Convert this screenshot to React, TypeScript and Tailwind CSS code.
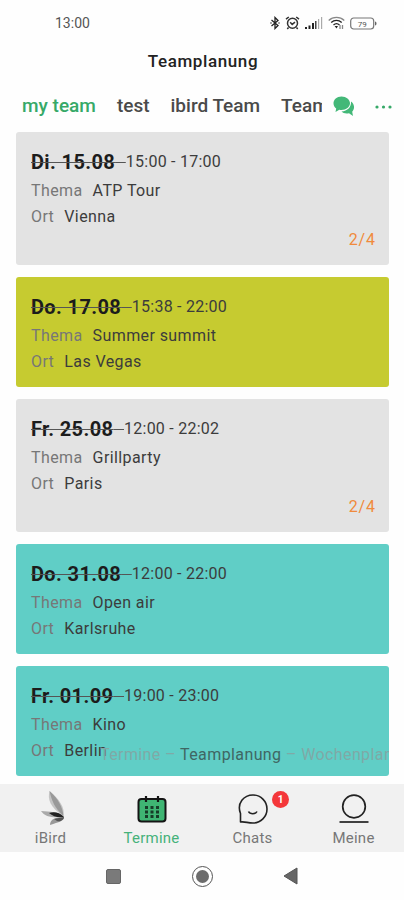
import { ReactNode } from "react";

interface Appointment {
  date: string;
  time: string;
  topic: string;
  place: string;
  color: string;
  count?: string;
}

const appointments: Appointment[] = [
  { date: "Di. 15.08", time: "15:00 - 17:00", topic: "ATP Tour", place: "Vienna", color: "bg-[#e3e3e3]", count: "2/4" },
  { date: "Do. 17.08", time: "15:38 - 22:00", topic: "Summer summit", place: "Las Vegas", color: "bg-[#c6cb30]" },
  { date: "Fr. 25.08", time: "12:00 - 22:02", topic: "Grillparty", place: "Paris", color: "bg-[#e3e3e3]", count: "2/4" },
  { date: "Do. 31.08", time: "12:00 - 22:00", topic: "Open air", place: "Karlsruhe", color: "bg-[#60cec6]" },
  { date: "Fr. 01.09", time: "19:00 - 23:00", topic: "Kino", place: "Berlin", color: "bg-[#60cec6]" },
];

function StatusBar() {
  return (
    <div className="flex h-[46px] items-center justify-between pr-[27px] pl-[55px] text-[#555]">
      <span className="text-[14px]">13:00</span>
      <div className="flex items-center">
        {/* Bluetooth */}
        <svg width="10" height="14" viewBox="0 0 10 14" fill="none" stroke="#222" strokeWidth="1.3">
          <path d="M1.5 4 8 9.5 5 12.5V1.5L8 4.5 1.5 10" />
          <path d="M.5 7h1M8.5 7h1" />
        </svg>
        {/* Alarm */}
        <svg className="ml-[5px]" width="15" height="14" viewBox="0 0 15 14" fill="none" stroke="#333" strokeWidth="1.5">
          <circle cx="7.5" cy="7.3" r="5" />
          <path d="M1 3.2 3.8 1M14 3.2 11.2 1M5.2 6.2l2 2.2 2.8-2.2M3.5 11.5 2.3 13M11.5 11.5l1.2 1.5" />
        </svg>
        {/* Signal */}
        <svg className="ml-1" width="19" height="12" viewBox="0 0 19 12">
          <path d="M1 10h2v2H1zM4.500 8.500h2V12h-2zM8 6h2v6H8z" fill="#222" />
          <path d="M11 4h1.500v8H11z" fill="#444" />
          <path d="M14 2h1.200v10H14zM17 0h1.200v12H17z" fill="#aaa" />
        </svg>
        {/* Wifi */}
        <svg className="ml-[5px]" width="17" height="14" viewBox="0 0 17 14" fill="none" strokeWidth="1.3">
          <path d="M.7 4.500C5 .3 12 .3 16.300 4.500" stroke="#888" />
          <path d="M3.200 6.500c3-2.900 7.500-2.900 10.500 0M5.500 9c1.800-1.700 4.200-1.700 6 0" stroke="#222" />
          <path d="m6.600 10 1.900 2.500 1.500-2.500z" fill="#222" />
          <path d="M12 9v4M14.500 9v4" stroke="#888" />
        </svg>
        {/* Battery */}
        <svg className="ml-[5px]" width="27" height="13" viewBox="0 0 27 13">
          <rect x=".7" y="1" width="23" height="11" rx="3" fill="none" stroke="#777" strokeWidth="1.200" />
          <path d="M25 4.500c2 .5 2 3.500 0 4z" fill="#666" />
          <text x="12.200" y="9.500" textAnchor="middle" fontSize="8" fill="#555">79</text>
        </svg>
      </div>
    </div>
  );
}

function TeamTabs() {
  return (
    <div className="flex h-[51px] items-center pr-[12px] pl-[22px] text-[19px] font-medium whitespace-nowrap text-[#4a4a4a]">
      <div className="flex w-[300px] gap-[21px] overflow-hidden">
        <span className="text-[#36a968]">my team</span>
        <span>test</span>
        <span>ibird Team</span>
        <span>Team</span>
      </div>
      {/* Chat bubbles */}
      <svg className="ml-[11px] shrink-0" width="22" height="21" viewBox="0 0 22 21" fill="#43b878">
        <path d="M8.500.5C3.800.500.500 3.500.500 7.300c0 2.200 1 4 2.700 5.200L2.500 16l3.800-2.200c.7.200 1.500.200 2.200.200 4.700 0 8.500-3 8.500-6.700S13.200.500 8.500.500z" />
        <path d="M18 5.500c.5 5.500-3.500 9.500-9.500 10 1.500 1.700 4.500 2.500 7.500 1.700l4 2.800-.8-4.300c2.800-2.700 2.500-7.500-1.200-10.200z" />
      </svg>
      <svg className="ml-auto" width="17" height="4" viewBox="0 0 17 4" fill="#36a968">
        <circle cx="2" cy="2" r="1.600" />
        <circle cx="8.500" cy="2" r="1.600" />
        <circle cx="15" cy="2" r="1.600" />
      </svg>
    </div>
  );
}

function AppointmentCard({ date, time, topic, place, color, count }: Appointment) {
  return (
    <div className={`rounded-[3px] px-[15px] pt-[18px] ${color} ${count ? "h-[133px]" : "h-[110px]"}`}>
      <div className="flex h-6 items-center text-[16px] text-[#3c3c3c]">
        <span className="text-[20px] font-bold tracking-[0.37px] whitespace-pre text-[#1c1c1c]">
          <span className="line-through decoration-[#555] decoration-1">{date}{"  "}</span>
        </span>
        <span className="tracking-[0.25px]">{time}</span>
      </div>
      <div className="flex h-7 items-center gap-[10px] pt-1.5 text-[16px] tracking-[0.4px]">
        <span className="text-[#777]">Thema</span>
        <span className="text-[#3c3c3c]">{topic}</span>
      </div>
      <div className="flex h-[26px] items-center gap-[10px] pt-1 text-[16px] tracking-[0.4px]">
        <span className="text-[#777]">Ort</span>
        <span className="text-[#3c3c3c]">{place}</span>
      </div>
      {count && <div className="-mr-0.5 text-right text-[16px] leading-6 tracking-[0.9px] text-[#f08a3c]">{count}</div>}
    </div>
  );
}

interface NavItemProps {
  label: string;
  active?: boolean;
  badge?: string;
  children: ReactNode;
}

function NavItem({ label, active, badge, children }: NavItemProps) {
  return (
    <div className="relative flex flex-1 flex-col items-center pt-[7px]">
      <div className="flex h-9 items-center">{children}</div>
      {badge && (
        <span className="absolute top-[7px] left-[70px] flex size-[17px] items-center justify-center rounded-full bg-[#f4373a] text-[10px] font-bold text-white">
          {badge}
        </span>
      )}
      <span className={`text-[15px] leading-[22px] tracking-[0.25px] ${active ? "text-[#45b27a]" : "text-[#777]"}`}>{label}</span>
    </div>
  );
}

function BottomNav() {
  return (
    <div className="flex h-[68px] bg-[#f1f1f1]">
      <NavItem label="iBird">
        <svg className="ml-1" width="24" height="36" viewBox="0 0 24 36">
          <path d="M8.500 0c-2 8 0 16 14 25C24 16 18 8 8.500 0z" fill="#c4c4c4" />
          <path d="M8.500 0c2 9 5 17 14 25-1-9-5-17-14-25z" fill="#999" />
          <path d="M0 20c4 6 11 7 23 6C17 20 9 21 0 20z" fill="#aaa" />
          <path d="M8 22c5-1.500 10-1 15 4-6 1-11-.5-15-4z" fill="#222" />
          <path d="M9 34c0-6 6-8 14-8 0 4-5 5-14 8z" fill="#999" />
          <path d="m13 28 10-2c0 3-4 5-7 4z" fill="#555" />
        </svg>
      </NavItem>
      <NavItem label="Termine" active>
        <svg width="30" height="28" viewBox="0 0 30 28">
          <rect x="1.500" y="4" width="27" height="22.500" rx="3" fill="#3fb573" stroke="#151515" strokeWidth="2" />
          <path d="M9 1v6M21 1v6" stroke="#151515" strokeWidth="2.200" />
          <g fill="#173c28">
            <path d="M8 11h3v3H8zM13.500 11h3v3h-3zM19 11h3v3h-3z" />
            <path d="M8 15.500h3v3H8zM13.500 15.500h3v3h-3zM19 15.500h3v3h-3z" />
            <path d="M8 20h3v3H8zM13.500 20h3v3h-3zM19 20h3v3h-3z" />
          </g>
        </svg>
      </NavItem>
      <NavItem label="Chats" badge="1">
        <svg width="30" height="30" viewBox="0 0 30 30" fill="none" stroke="#222" strokeWidth="1.600">
          <path d="M2.500 28V19.500C-1.500 9 6 1 15 1a14 14 0 0 1 0 28C9 29 8 27.500 2.500 28z" strokeLinejoin="round" />
          <path d="M10.500 17.500c1.500 3 7 3 8.500 0" />
        </svg>
      </NavItem>
      <NavItem label="Meine">
        <svg width="30" height="30" viewBox="0 0 30 30" fill="none" stroke="#222" strokeWidth="1.700">
          <circle cx="15" cy="12.500" r="11.300" />
          <path d="M.5 28h29" />
        </svg>
      </NavItem>
    </div>
  );
}

function SystemBar() {
  return (
    <div className="flex h-12 items-center justify-between pr-[106px] pl-[106px]">
      <div className="size-[15px] rounded-[2px] border border-[#666] bg-[#7a7a7a]" />
      <div className="flex size-[21px] items-center justify-center rounded-full border-[1.5px] border-[#555]">
        <div className="size-[13px] rounded-full bg-[#6c6c6c]" />
      </div>
      <svg width="15" height="18" viewBox="0 0 15 18">
        <path d="M1 9 14 1v16z" fill="#666" stroke="#555" strokeLinejoin="round" />
      </svg>
    </div>
  );
}

export default function App() {
  return (
    <div className="flex h-[900px] w-[404px] flex-col overflow-hidden bg-[#fefefe] font-['Roboto',sans-serif]">
      <StatusBar />
      <h1 className="h-[35px] pt-[3px] pl-0.5 text-center text-[17px] leading-6 font-medium tracking-[0.6px] text-[#222]">
        Teamplanung
      </h1>
      <TeamTabs />
      <div className="relative flex flex-col gap-3 pr-[15px] pl-4">
        {appointments.map((item) => (
          <AppointmentCard key={item.date} {...item} />
        ))}
        {/* Page indicator above the last card */}
        <div className="absolute right-[15px] bottom-[9px] left-[100px] overflow-hidden text-[16px] leading-6 tracking-[0.4px] whitespace-nowrap text-[#7fa9a6]">
          Termine – <span className="text-[#3f6663]">Teamplanung</span> – Wochenplan
        </div>
      </div>
      <div className="mt-auto">
        <BottomNav />
        <SystemBar />
      </div>
    </div>
  );
}
